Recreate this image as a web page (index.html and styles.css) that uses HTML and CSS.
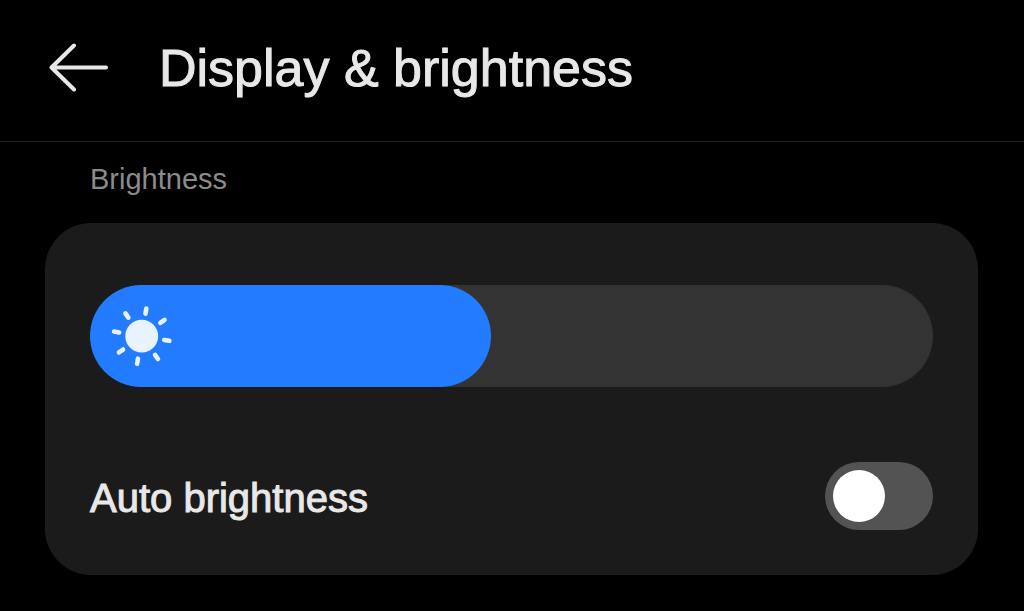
FILE: index.html
```html
<!DOCTYPE html>
<html lang="en">
<head>
<meta charset="utf-8">
<meta name="viewport" content="width=device-width, initial-scale=1">
<title>Display &amp; brightness</title>
<link rel="stylesheet" href="styles.css">
</head>
<body>
<header class="header">
  <button class="back" type="button" aria-label="Back">
    <svg class="back-icon" viewBox="0 0 60 50" aria-hidden="true">
      <path d="M26 2.500 3.500 24.500 26 46.500M3.500 24.500H58"/>
    </svg>
  </button>
  <h1 class="title">Display &amp; brightness</h1>
</header>
<main class="content">
  <h2 class="section-label" id="brightness-label">Brightness</h2>
  <section class="card">
    <div class="slider">
      <input class="slider-input" type="range" min="0" max="1000" value="404" style="--level: 0.404" aria-labelledby="brightness-label">
      <svg class="sun" viewBox="-31 -31 62 62" aria-hidden="true">
        <circle cx="-0.300" cy="0.200" r="16.400"/>
        <g transform="translate(-0.300 0.200) rotate(9.500)">
          <path d="M0-22.800V-28M0 22.800V28M22.800 0H28M-22.800 0H-28M16.200-16.200 19.800-19.800M16.200 16.200 19.800 19.800M-16.200 16.200-19.800 19.800M-16.200-16.200-19.800-19.800"/>
        </g>
      </svg>
    </div>
    <div class="row">
      <label class="row-label" for="auto">Auto brightness</label>
      <input class="switch" id="auto" type="checkbox" role="switch">
    </div>
  </section>
</main>
</body>
</html>
```
FILE: styles.css
```css
* {
  box-sizing: border-box;
}

body {
  margin: 0;
  background: #000;
  color: #e8e8e8;
  font-family: "Liberation Sans", Arial, sans-serif;
}

.header {
  display: flex;
  align-items: center;
  gap: 51px;
  padding: 36px 48px 41px;
  border-bottom: 1px solid #202020;
}

.back {
  display: flex;
  padding: 0;
  border: 0;
  background: none;
  color: inherit;
}

.back-icon {
  width: 60px;
  height: 50px;
  fill: none;
  stroke: currentColor;
  stroke-width: 4;
  stroke-linecap: round;
  stroke-linejoin: round;
}

.title {
  margin: 0;
  font-size: 52px;
  font-weight: 400;
  line-height: 64px;
  -webkit-text-stroke: 1px currentColor;
}

.content {
  padding: 19px 46px 36px 45px;
}

.section-label {
  margin: 0 45px 26px;
  color: #8b8b8b;
  font-size: 29px;
  font-weight: 400;
  line-height: 36px;
}

.card {
  padding: 62px 45px 45px;
  border-radius: 46px;
  background: #1b1b1b;
}

.slider {
  position: relative;
  display: flex;
}

.slider-input {
  flex: 1;
  min-width: 0;
  height: 102px;
  margin: 0;
  appearance: none;
  border-radius: 51px;
  background: linear-gradient(to right, #237cff calc(51px + var(--level) * (100% - 102px)), #333 0);
}

.slider-input::-webkit-slider-thumb {
  width: 102px;
  height: 102px;
  appearance: none;
  border-radius: 50%;
  background: #237cff;
}

.sun {
  position: absolute;
  top: 20px;
  left: 21px;
  width: 62px;
  height: 62px;
  fill: #e9f2ff;
  stroke: none;
  pointer-events: none;
}

.sun path {
  fill: none;
  stroke: #e9f2ff;
  stroke-width: 4.6;
  stroke-linecap: round;
}

.row {
  display: flex;
  align-items: center;
  justify-content: space-between;
  margin-top: 75px;
}

.row-label {
  padding-top: 4px;
  font-size: 40px;
  line-height: 48px;
  -webkit-text-stroke: 1px currentColor;
}

.switch {
  display: flex;
  align-items: center;
  width: 108px;
  height: 68px;
  margin: 0;
  padding: 8px;
  appearance: none;
  border-radius: 34px;
  background: #535353;
}

.switch::before {
  width: 52px;
  height: 52px;
  border-radius: 50%;
  background: #fff;
  content: "";
}

.switch:checked {
  justify-content: flex-end;
  background: #237cff;
}
```
